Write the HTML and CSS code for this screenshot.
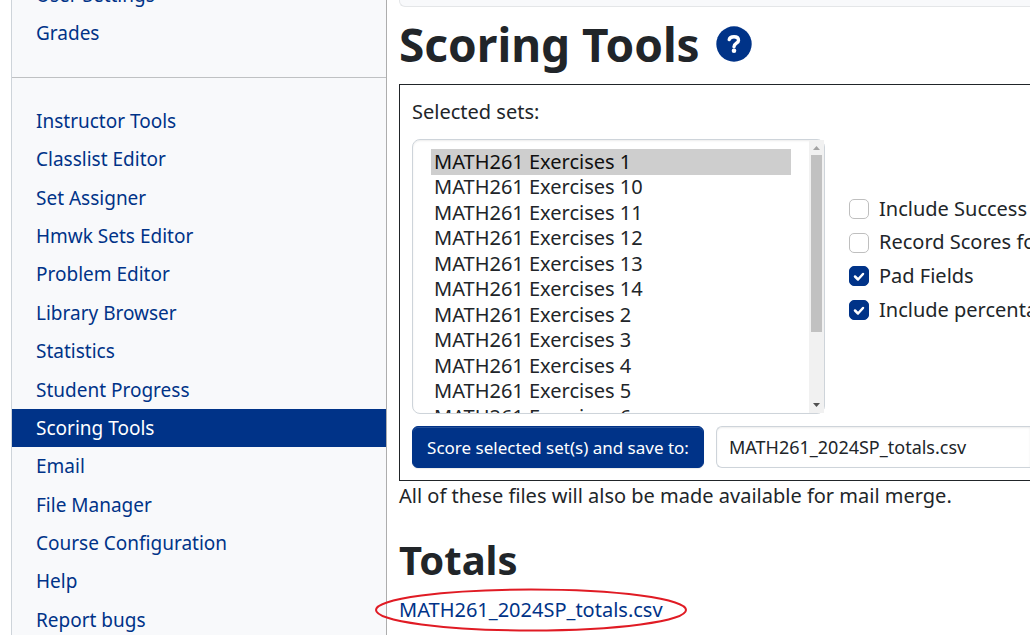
FILE: index.html
```html
<!DOCTYPE html>
<html lang="en">
<head>
<meta charset="utf-8">
<title>Scoring Tools</title>
<link rel="stylesheet" href="styles.css">
</head>
<body>
<div class="page">
  <nav class="sidebar" aria-label="Main menu">
    <ul class="menu">
      <li><a href="#">User Settings</a></li>
      <li><a href="#">Grades</a></li>
    </ul>
    <hr class="divider">
    <ul class="menu">
      <li><a href="#">Instructor Tools</a></li>
      <li><a href="#">Classlist Editor</a></li>
      <li><a href="#">Set Assigner</a></li>
      <li><a href="#">Hmwk Sets Editor</a></li>
      <li><a href="#">Problem Editor</a></li>
      <li><a href="#">Library Browser</a></li>
      <li><a href="#">Statistics</a></li>
      <li><a href="#">Student Progress</a></li>
      <li><a href="#" class="active" aria-current="page">Scoring Tools</a></li>
      <li><a href="#">Email</a></li>
      <li><a href="#">File Manager</a></li>
      <li><a href="#">Course Configuration</a></li>
      <li><a href="#">Help</a></li>
      <li><a href="#">Report bugs</a></li>
    </ul>
  </nav>
  <main class="content">
    <div class="breadcrumb"></div>
    <div class="title">
      <h1>Scoring Tools</h1>
      <a href="#" class="help" aria-label="Help">
        <svg viewBox="0 0 36 36" width="36" height="36" aria-hidden="true">
          <circle cx="18" cy="18" r="17.7" fill="#003388"/>
          <path d="M13.2 13.6C13.8 11.2 15.4 10.8 18 10.8C20.5 10.8 22.5 12 22.5 14.4C22.5 17.2 18 17.2 18 20.7" fill="none" stroke="#fff" stroke-width="3.4" stroke-linecap="round"/>
          <circle cx="18" cy="24.7" r="2.3" fill="#fff"/>
        </svg>
      </a>
    </div>
    <form class="panel">
      <label class="sets-label" for="sets">Selected sets:</label>
      <div class="options">
        <div class="sets-box">
          <select id="sets" class="sets" multiple>
            <option selected>MATH261 Exercises 1</option>
            <option>MATH261 Exercises 10</option>
            <option>MATH261 Exercises 11</option>
            <option>MATH261 Exercises 12</option>
            <option>MATH261 Exercises 13</option>
            <option>MATH261 Exercises 14</option>
            <option>MATH261 Exercises 2</option>
            <option>MATH261 Exercises 3</option>
            <option>MATH261 Exercises 4</option>
            <option>MATH261 Exercises 5</option>
            <option>MATH261 Exercises 6</option>
            <option>MATH261 Exercises 7</option>
            <option>MATH261 Exercises 8</option>
            <option>MATH261 Exercises 9</option>
          </select>
          <svg class="scrollbar" viewBox="0 0 15 273" width="15" height="273" aria-hidden="true">
            <rect width="15" height="273" fill="#f1f1f1"/>
            <path d="M4 10L7.5 6L11 10Z" fill="#a3a3a3"/>
            <rect x="2" y="15" width="11" height="177" fill="#c1c1c1"/>
            <path d="M4 263L7.5 267L11 263Z" fill="#505050"/>
          </svg>
        </div>
        <div class="checks">
          <label class="check"><input type="checkbox">Include Success Index</label>
          <label class="check"><input type="checkbox">Record Scores for Single Sets</label>
          <label class="check"><input type="checkbox" checked>Pad Fields</label>
          <label class="check"><input type="checkbox" checked>Include percentage grades</label>
        </div>
      </div>
      <div class="save">
        <button type="button" class="score">Score selected set(s) and save to:</button>
        <input type="text" class="filename" aria-label="File name" value="MATH261_2024SP_totals.csv">
      </div>
    </form>
    <p class="note">All of these files will also be made available for mail merge.</p>
    <h2>Totals</h2>
    <a href="#" class="file">MATH261_2024SP_totals.csv
      <svg class="ring" viewBox="0 0 312 44" width="312" height="44" aria-hidden="true">
        <ellipse cx="156" cy="22" rx="155" ry="20.5" fill="none" stroke="#e01b24" stroke-width="2"/>
      </svg>
    </a>
  </main>
</div>
</body>
</html>
```
FILE: styles.css
```css
* { box-sizing: border-box; }

body {
  margin: 0;
  overflow: hidden;
  background: #fff;
  color: #212529;
  font: 20px/1.43 "Noto Sans", sans-serif;
}

a { color: #003388; text-decoration: none; }

.page {
  display: grid;
  grid-template-columns: 376px minmax(0, 1fr);
  column-gap: 12px;
  height: 100vh;
  padding-left: 11px;
  overflow: hidden;
}

.sidebar {
  background: #f8f9fb;
  border-left: 1px solid #ced4da;
  border-right: 1px solid #adadad;
  font-size: 19px;
}

.menu { margin: 0; padding: 0; list-style: none; }
.menu:first-child { margin-top: -24px; }
.menu a { display: block; padding: 4px 24px; line-height: 1.6; }
.menu .active { background: #003388; color: #fff; }
.divider { margin: 24px 0; border: 0; border-top: 1px solid #bfc1c3; }

.content { white-space: nowrap; }

.breadcrumb {
  height: 7px;
  background: #f8f9fb;
  border: solid #e4e6e8;
  border-width: 0 0 1px 1px;
  border-bottom-left-radius: 6px;
}

.title { display: flex; align-items: center; gap: 16px; height: 77px; padding-bottom: 3px; }
h1 { margin: 0; font-size: 46px; line-height: 58px; }
.help { display: flex; }

.panel {
  border: 1px solid #212529;
  border-right: 0;
  padding: 12px 0 12px 12px;
}
.sets-label { display: block; line-height: 30px; margin-bottom: 12px; }

.options { display: flex; align-items: center; gap: 24px; }
.sets-box { position: relative; display: flex; flex: none; width: 413px; }
.sets {
  width: 100%;
  height: 275px;
  padding: 9px 33px 9px 18px;
  border: 1px solid #ced4da;
  border-radius: 8px;
  background: #fff;
  color: #212529;
  box-shadow: inset 0 1px 2px rgba(0, 0, 0, .08);
  font: inherit;
  scrollbar-width: none;
}
.sets option {
  display: flex;
  align-items: center;
  height: 25px;
  min-height: 0;
  padding: 0 3px 2px;
}
.sets option:nth-child(odd) { height: 26px; }
.scrollbar { position: absolute; top: 1px; right: 1px; pointer-events: none; }

.checks { display: grid; gap: 5px; margin-bottom: 34px; }
.check { display: flex; align-items: center; gap: 10px; }
.check input {
  flex: none;
  appearance: none;
  width: 20px;
  height: 20px;
  margin: 0;
  border: 1px solid #bfbfbf;
  border-radius: 5px;
  background: #fff;
}
.check input:checked {
  border-color: #003388;
  background: #003388 url("data:image/svg+xml,%3Csvg xmlns='http://www.w3.org/2000/svg' viewBox='0 0 20 20'%3E%3Cpath d='M6 10.500L9 13.500L14 8' fill='none' stroke='%23fff' stroke-width='2.500' stroke-linecap='round' stroke-linejoin='round'/%3E%3C/svg%3E") center / 20px 20px no-repeat;
}

.save { display: flex; gap: 12px; margin-top: 12px; }
.score, .filename {
  height: 42px;
  padding: 0 12px;
  border-radius: 6px;
  font: 17px "Noto Sans", sans-serif;
}
.score {
  flex: none;
  width: 292px;
  border: 1px solid #003388;
  background: #003388;
  color: #fff;
  box-shadow: inset 0 1px 0 rgba(255, 255, 255, .15), 0 1px 1px rgba(0, 0, 0, .08);
}
.filename {
  flex: 1;
  min-width: 0;
  border: 1px solid #ced4da;
  border-right: 0;
  border-radius: 6px 0 0 6px;
  background: #fff;
  color: #212529;
  box-shadow: inset 0 1px 2px rgba(0, 0, 0, .08);
  font-size: 18px;
}

.note { margin: 0; line-height: 30px; }
h2 { margin: 24px 0 10px; font-size: 40px; line-height: 50px; }
.file { position: relative; display: inline-block; line-height: 30px; }
.ring { position: absolute; top: -7px; left: -24px; }
```
